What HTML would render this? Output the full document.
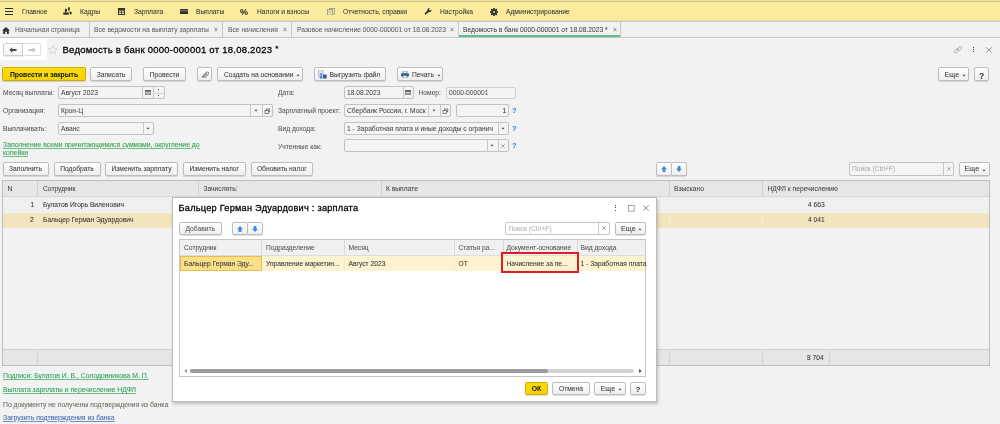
<!DOCTYPE html>
<html><head><meta charset="utf-8">
<style>
*{box-sizing:border-box;margin:0;padding:0}
html,body{width:1000px;height:424px;overflow:hidden;background:#f2f2f2;font-family:"Liberation Sans",sans-serif;color:#333}
#root{position:absolute;left:0;top:0;width:1000px;height:424px;overflow:hidden;background:#f2f2f2;will-change:transform}
.a{position:absolute}
.t{position:absolute;white-space:nowrap;-webkit-text-stroke-width:0.05px}
.lk{text-decoration:underline;text-decoration-thickness:1px;text-underline-offset:0.5px}
.g{text-decoration-color:rgba(39,160,77,.65)}
.b{text-decoration-color:rgba(59,104,179,.7)}
</style></head><body><div id="root">
<div class="a" style="left:0px;top:0px;width:1000px;height:21px;background:#fbeb9d"></div>
<div class="a" style="left:0px;top:0px;width:1000px;height:1px;background:#efe1a0"></div>
<div class="a" style="left:0px;top:1px;width:1000px;height:1px;background:#d2c382"></div>
<div class="a" style="left:0px;top:20px;width:1000px;height:1px;background:#eadb94"></div>
<div class="a" style="left:0px;top:21px;width:1000px;height:1px;background:#c9c9c9"></div>
<div class="t " style="left:22px;top:8px;font-size:6.7px;line-height:8px;color:#353535;font-weight:normal;">Главное</div>
<div class="t " style="left:80px;top:8px;font-size:6.7px;line-height:8px;color:#353535;font-weight:normal;">Кадры</div>
<div class="t " style="left:134px;top:8px;font-size:6.7px;line-height:8px;color:#353535;font-weight:normal;">Зарплата</div>
<div class="t " style="left:196px;top:8px;font-size:6.7px;line-height:8px;color:#353535;font-weight:normal;">Выплаты</div>
<div class="t " style="left:257px;top:8px;font-size:6.7px;line-height:8px;color:#353535;font-weight:normal;">Налоги и взносы</div>
<div class="t " style="left:343px;top:8px;font-size:6.7px;line-height:8px;color:#353535;font-weight:normal;">Отчетность, справки</div>
<div class="t " style="left:440px;top:8px;font-size:6.7px;line-height:8px;color:#353535;font-weight:normal;">Настройка</div>
<div class="t " style="left:506px;top:8px;font-size:6.7px;line-height:8px;color:#353535;font-weight:normal;">Администрирование</div>
<div class="a" style="left:5px;top:8px;width:8px;height:1.1999999999999993px;background:#2b2b2b"></div>
<div class="a" style="left:5px;top:11px;width:8px;height:1.1999999999999993px;background:#2b2b2b"></div>
<div class="a" style="left:5px;top:14px;width:8px;height:1.1999999999999993px;background:#2b2b2b"></div>
<svg class="a" style="left:62px;top:6px" width="11" height="10" viewBox="0 0 11 10"><g fill="#2e2e2e"><ellipse cx="3.9" cy="4.3" rx="1.05" ry="1.9"/><rect x="1.3" y="6.4" width="5.4" height="2.3"/><ellipse cx="6.9" cy="2.9" rx="1" ry="1.8"/><path d="M7.3 5.3 L9.7 6.2 L9.5 8.2 L8.1 8.4 L7.5 6.8Z"/></g></svg>
<svg class="a" style="left:118px;top:8px" width="7" height="7" viewBox="0 0 7 7"><rect x="0.5" y="0.5" width="6" height="6" fill="none" stroke="#333" stroke-width="1"/><rect x="1" y="1" width="5" height="1.6" fill="#333"/><path d="M1 4.2H6M3.5 2.6V6.5" stroke="#333" stroke-width="0.8"/></svg>
<svg class="a" style="left:179.5px;top:9px" width="8" height="5" viewBox="0 0 8 5"><rect x="0" y="0" width="8" height="5" fill="#2e2e2e"/><rect x="0" y="1.2" width="8" height="1" fill="#fbeb9d" opacity="0.5"/></svg>
<div class="t " style="left:240px;top:5.5px;font-size:9px;line-height:12px;color:#2a2a2a;font-weight:bold;">%</div>
<svg class="a" style="left:327px;top:8px" width="8" height="7" viewBox="0 0 8 7"><rect x="2.5" y="0.5" width="5" height="5.5" fill="none" stroke="#999" stroke-width="0.9"/><rect x="0.5" y="1.5" width="5" height="5.5" fill="#fbeb9d" stroke="#999" stroke-width="0.9"/><path d="M1.5 3.2H4.5M1.5 4.6H4.5" stroke="#999" stroke-width="0.6"/></svg>
<svg class="a" style="left:424px;top:8px" width="8" height="7" viewBox="0 0 8 7"><path d="M7.6 1.6 A2.3 2.3 0 0 1 4.6 4 L1.6 6.8 L0.4 5.7 L3.3 2.8 A2.3 2.3 0 0 1 5.9 0.1 L4.8 1.5 L5.3 2.3 L6.2 2.5Z" fill="#2b2b2b"/></svg>
<svg class="a" style="left:490px;top:7.5px" width="8" height="8" viewBox="0 0 8 8"><g fill="#2b2b2b"><circle cx="4" cy="4" r="2.6"/><rect x="3.2" y="0" width="1.6" height="8"/><rect x="0" y="3.2" width="8" height="1.6"/><rect x="3.2" y="0" width="1.6" height="8" transform="rotate(45 4 4)"/><rect x="3.2" y="0" width="1.6" height="8" transform="rotate(-45 4 4)"/></g><circle cx="4" cy="4" r="1.1" fill="#fbeb9d"/></svg>
<div class="a" style="left:0px;top:22px;width:1000px;height:15px;background:#f0f0f0"></div>
<div class="a" style="left:0px;top:37px;width:1000px;height:1px;background:#c4c4c4"></div>
<svg class="a" style="left:2px;top:27px" width="8" height="7" viewBox="0 0 8 7"><path d="M4 0 L8 3.6 H6.8 V7 H4.9 V4.8 H3.1 V7 H1.2 V3.6 H0Z" fill="#333"/></svg>
<div class="t " style="left:15px;top:26px;font-size:6.7px;line-height:8px;color:#626262;font-weight:normal;">Начальная страница</div>
<div class="a" style="left:89px;top:22px;width:1px;height:15px;background:#c9c9c9"></div>
<div class="t " style="left:94px;top:26px;font-size:6.7px;line-height:8px;color:#626262;font-weight:normal;">Все ведомости на выплату зарплаты</div>
<div class="t " style="left:214px;top:26px;font-size:6.7px;line-height:8px;color:#777;font-weight:normal;">×</div>
<div class="a" style="left:222px;top:22px;width:1px;height:15px;background:#c9c9c9"></div>
<div class="t " style="left:228px;top:26px;font-size:6.7px;line-height:8px;color:#626262;font-weight:normal;">Все начисления</div>
<div class="t " style="left:283px;top:26px;font-size:6.7px;line-height:8px;color:#777;font-weight:normal;">×</div>
<div class="a" style="left:291px;top:22px;width:1px;height:15px;background:#c9c9c9"></div>
<div class="t " style="left:297px;top:26px;font-size:6.7px;line-height:8px;color:#626262;font-weight:normal;">Разовое начисление 0000-000001 от 18.08.2023</div>
<div class="t " style="left:450px;top:26px;font-size:6.7px;line-height:8px;color:#777;font-weight:normal;">×</div>
<div class="a" style="left:458px;top:22px;width:1px;height:15px;background:#c9c9c9"></div>
<div class="a" style="left:459px;top:22px;width:161px;height:15px;background:#f2f2f2"></div>
<div class="t " style="left:463px;top:26px;font-size:6.7px;line-height:8px;color:#444;font-weight:normal;">Ведомость в банк 0000-000001 от 18.08.2023 *</div>
<div class="t " style="left:613px;top:26px;font-size:6.7px;line-height:8px;color:#777;font-weight:normal;">×</div>
<div class="a" style="left:620px;top:22px;width:1px;height:15px;background:#c9c9c9"></div>
<div class="a" style="left:459px;top:35px;width:161px;height:2px;background:#5cbf85"></div>
<div class="a" style="left:0px;top:38px;width:47px;height:22px;background:#fff"></div>
<div class="a" style="left:3px;top:43px;width:20px;height:13px;border:1px solid #cfcfcf;border-radius:2px 0 0 2px;background:linear-gradient(#fff,#f3f3f3);box-shadow:0 1px 0 rgba(0,0,0,.08)"></div>
<div class="a" style="left:22px;top:43px;width:19px;height:13px;border:1px solid #dcdcdc;border-left:none;border-radius:0 2px 2px 0;background:#fff"></div>
<div class="a" style="left:22px;top:43px;width:1px;height:13px;background:#cfcfcf"></div>
<svg class="a" style="left:9px;top:46.5px" width="8" height="6" viewBox="0 0 8 6"><path d="M0.3 3 L3.3 0.3 V2 H7.5 V4 H3.3 V5.7Z" fill="#4a4a4a"/></svg>
<svg class="a" style="left:28px;top:46.5px" width="8" height="6" viewBox="0 0 8 6"><path d="M7.7 3 L4.7 0.3 V2 H0.5 V4 H4.7 V5.7Z" fill="#c4c4c4"/></svg>
<svg class="a" style="left:47.5px;top:45px" width="10" height="10" viewBox="0 0 10 10"><path d="M5 0.6 L6.3 3.6 L9.4 3.8 L7 5.9 L7.8 9 L5 7.3 L2.2 9 L3 5.9 L0.6 3.8 L3.7 3.6Z" fill="none" stroke="#cfcfcf" stroke-width="0.8"/></svg>
<div class="t " style="left:62.5px;top:44px;font-size:9.5px;line-height:12px;color:#000;font-weight:normal;-webkit-text-stroke-width:0.28px;letter-spacing:0.25px">Ведомость в банк 0000-000001 от 18.08.2023 <span style="font-size:8px;position:relative;top:-2px">*</span></div>
<svg class="a" style="left:952.5px;top:46px" width="10" height="8" viewBox="0 0 10 8"><g fill="none" stroke="#9c9c9c" stroke-width="0.8"><rect x="0.8" y="3.6" width="5" height="2.6" rx="1.3" transform="rotate(-40 3.3 4.9)"/><rect x="4.2" y="1.2" width="5" height="2.6" rx="1.3" transform="rotate(-40 6.7 2.5)"/></g></svg>
<div class="a" style="left:972.5px;top:46.5px;width:1.2999999999999545px;height:1.2999999999999972px;background:#333"></div>
<div class="a" style="left:972.5px;top:48.8px;width:1.2999999999999545px;height:1.2999999999999972px;background:#333"></div>
<div class="a" style="left:972.5px;top:51.1px;width:1.2999999999999545px;height:1.2999999999999972px;background:#333"></div>
<svg class="a" style="left:986px;top:47px" width="6" height="6" viewBox="0 0 6 6"><path d="M0.3 0.3L5.7 5.7M5.7 0.3L0.3 5.7" stroke="#8c8c8c" stroke-width="0.9"/></svg>
<div class="a" style="left:2px;top:67px;width:84px;height:14px;border:1px solid #cdae00;border-radius:1.5px;background:linear-gradient(#fadb10,#f5d300);box-shadow:0 1px 1px rgba(0,0,0,.15)"></div>
<div class="t" style="left:2px;width:84px;text-align:center;top:71px;font-size:6.8px;line-height:8px;color:#1a1a30;font-weight:bold">Провести и закрыть</div>
<div class="a" style="left:90px;top:67px;width:42px;height:14px;border:1px solid #bdbdbd;border-radius:2px;background:linear-gradient(#fefefe,#eeeeee);box-shadow:0 1px 1px rgba(0,0,0,.13);"></div>
<div class="t" style="left:90px;width:42px;text-align:center;top:71px;font-size:6.7px;line-height:8px;color:#3a3a3a;font-weight:normal">Записать</div>
<div class="a" style="left:143px;top:67px;width:43px;height:14px;border:1px solid #bdbdbd;border-radius:2px;background:linear-gradient(#fefefe,#eeeeee);box-shadow:0 1px 1px rgba(0,0,0,.13);"></div>
<div class="t" style="left:143px;width:43px;text-align:center;top:71px;font-size:6.7px;line-height:8px;color:#3a3a3a;font-weight:normal">Провести</div>
<div class="a" style="left:196.5px;top:67px;width:15.5px;height:14px;border:1px solid #bdbdbd;border-radius:2px;background:linear-gradient(#fefefe,#eeeeee);box-shadow:0 1px 1px rgba(0,0,0,.13);"></div>
<svg class="a" style="left:200.5px;top:71px" width="8" height="7" viewBox="0 0 8 7"><path d="M1 5.8 L5.6 1.2 A1.3 1.3 0 0 1 7.4 3 L3.2 7.2 A0.8 0.8 0 0 1 2 6 L5.8 2.2" fill="none" stroke="#8a8a8a" stroke-width="1.1"/></svg>
<div class="a" style="left:217px;top:67px;width:86px;height:14px;border:1px solid #bdbdbd;border-radius:2px;background:linear-gradient(#fefefe,#eeeeee);box-shadow:0 1px 1px rgba(0,0,0,.13);"></div>
<div class="t " style="left:224px;top:71px;font-size:6.7px;line-height:8px;color:#3a3a3a;font-weight:normal;">Создать на основании</div>
<svg class="a" style="left:296px;top:73.5px" width="4" height="3" viewBox="0 0 4 3"><path d="M0.5 0.8 H3.5 L2 2.4Z" fill="#444"/></svg>
<div class="a" style="left:314px;top:67px;width:72px;height:14px;border:1px solid #bdbdbd;border-radius:2px;background:linear-gradient(#fefefe,#eeeeee);box-shadow:0 1px 1px rgba(0,0,0,.13);"></div>
<div class="t " style="left:329.5px;top:71px;font-size:6.7px;line-height:8px;color:#3a3a3a;font-weight:normal;">Выгрузить файл</div>
<svg class="a" style="left:318px;top:70px" width="9" height="9" viewBox="0 0 9 9"><rect x="0.5" y="0" width="4.5" height="6" fill="#d8e4f2" stroke="#8fa8c8" stroke-width="0.6"/><path d="M3 3 V8.2 M1.5 6.8 L3 8.5 L4.5 6.8" stroke="#2d5da8" stroke-width="1" fill="none"/><rect x="5" y="4.5" width="3.6" height="4" fill="#2d5da8"/></svg>
<div class="a" style="left:397px;top:67px;width:46px;height:14px;border:1px solid #bdbdbd;border-radius:2px;background:linear-gradient(#fefefe,#eeeeee);box-shadow:0 1px 1px rgba(0,0,0,.13);"></div>
<div class="t " style="left:412px;top:71px;font-size:6.7px;line-height:8px;color:#3a3a3a;font-weight:normal;">Печать</div>
<svg class="a" style="left:401px;top:70.5px" width="8" height="7" viewBox="0 0 8 7"><rect x="2" y="0" width="4" height="2.2" fill="#fff" stroke="#555" stroke-width="0.6"/><rect x="0" y="2.2" width="8" height="3.4" rx="0.8" fill="#2a62b0"/><rect x="2" y="4.5" width="4" height="2.5" fill="#fff" stroke="#555" stroke-width="0.6"/></svg>
<svg class="a" style="left:436.5px;top:73.5px" width="4" height="3" viewBox="0 0 4 3"><path d="M0.5 0.8 H3.5 L2 2.4Z" fill="#444"/></svg>
<div class="a" style="left:938px;top:67px;width:31px;height:14px;border:1px solid #bdbdbd;border-radius:2px;background:linear-gradient(#fefefe,#eeeeee);box-shadow:0 1px 1px rgba(0,0,0,.13);"></div>
<div class="t " style="left:944.5px;top:71px;font-size:7.2px;line-height:8px;color:#3a3a3a;font-weight:normal;">Еще</div>
<svg class="a" style="left:961.5px;top:74.0px" width="4" height="3" viewBox="0 0 4 3"><path d="M0.5 0.8 H3.5 L2 2.4Z" fill="#444"/></svg>
<div class="a" style="left:974px;top:67px;width:15px;height:14px;border:1px solid #bdbdbd;border-radius:2px;background:linear-gradient(#fefefe,#eeeeee);box-shadow:0 1px 1px rgba(0,0,0,.13);"></div>
<div class="t" style="left:974px;width:15px;text-align:center;top:72px;font-size:8.6px;line-height:8px;color:#3a3a3a;font-weight:bold">?</div>
<div class="t " style="left:3px;top:89px;font-size:6.7px;line-height:8px;color:#555;font-weight:normal;">Месяц выплаты:</div>
<div class="a" style="left:58px;top:86px;width:106.5px;height:13px;border:1px solid #c2c2c2;border-radius:2px;background:#f4f4f4"></div>
<div class="t " style="left:61px;top:89px;font-size:6.7px;line-height:8px;color:#474747;font-weight:normal;">Август 2023</div>
<div class="a" style="left:142px;top:86px;width:1px;height:13px;background:#c8c8c8"></div>
<div class="a" style="left:153px;top:86px;width:1px;height:13px;background:#c8c8c8"></div>
<div class="a" style="left:153px;top:92.5px;width:11px;height:1.0px;background:#d4d4d4"></div>
<svg class="a" style="left:145px;top:89.5px" width="6" height="5" viewBox="0 0 6 5"><rect x="0.3" y="0.3" width="5.4" height="4.6" fill="none" stroke="#555" stroke-width="0.6"/><rect x="0.3" y="0.3" width="5.4" height="1.5" fill="#555"/><path d="M0.5 3.3H5.5M2.1 1.8V5M3.9 1.8V5" stroke="#666" stroke-width="0.5"/></svg>
<div class="a" style="left:158.3px;top:89px;width:1.0px;height:1px;background:#444"></div>
<div class="a" style="left:158.3px;top:95.3px;width:1.0px;height:1.0px;background:#444"></div>
<div class="t " style="left:3px;top:107px;font-size:6.7px;line-height:8px;color:#555;font-weight:normal;">Организация:</div>
<div class="a" style="left:58px;top:104px;width:214.5px;height:13px;border:1px solid #c2c2c2;border-radius:2px;background:#f4f4f4"></div>
<div class="t " style="left:61px;top:107px;font-size:6.7px;line-height:8px;color:#474747;font-weight:normal;">Крон-Ц</div>
<div class="a" style="left:250px;top:104px;width:1px;height:13px;background:#c8c8c8"></div>
<div class="a" style="left:261.5px;top:104px;width:1.0px;height:13px;background:#c8c8c8"></div>
<svg class="a" style="left:254px;top:109.0px" width="4" height="3" viewBox="0 0 4 3"><path d="M0.5 0.8 H3.5 L2 2.4Z" fill="#444"/></svg>
<svg class="a" style="left:264px;top:107.5px" width="7" height="7" viewBox="0 0 7 7"><rect x="2.4" y="1" width="3.4" height="2.8" fill="none" stroke="#555" stroke-width="0.7"/><rect x="1" y="2.6" width="3.4" height="2.8" fill="#f4f4f4" stroke="#555" stroke-width="0.7"/></svg>
<div class="t " style="left:3px;top:125px;font-size:6.7px;line-height:8px;color:#555;font-weight:normal;">Выплачивать:</div>
<div class="a" style="left:58px;top:121.5px;width:95.5px;height:13.0px;border:1px solid #c2c2c2;border-radius:2px;background:#f4f4f4"></div>
<div class="t " style="left:61px;top:125px;font-size:6.7px;line-height:8px;color:#474747;font-weight:normal;">Аванс</div>
<div class="a" style="left:142.5px;top:121.5px;width:1.0px;height:13.0px;background:#c8c8c8"></div>
<svg class="a" style="left:146px;top:126.5px" width="4" height="3" viewBox="0 0 4 3"><path d="M0.5 0.8 H3.5 L2 2.4Z" fill="#444"/></svg>
<div class="t lk g" style="left:3px;top:140.5px;font-size:6.85px;line-height:8px;color:#27a04d;font-weight:normal;">Заполнение всеми причитающимися суммами, округление до</div>
<div class="t lk g" style="left:3px;top:149px;font-size:6.85px;line-height:8px;color:#27a04d;font-weight:normal;">копейки</div>
<div class="t " style="left:278px;top:89px;font-size:6.7px;line-height:8px;color:#555;font-weight:normal;">Дата:</div>
<div class="a" style="left:344px;top:86px;width:69.5px;height:13px;border:1px solid #c2c2c2;border-radius:2px;background:#f4f4f4"></div>
<div class="t " style="left:347px;top:89px;font-size:6.7px;line-height:8px;color:#474747;font-weight:normal;">18.08.2023</div>
<div class="a" style="left:402.5px;top:86px;width:1.0px;height:13px;background:#c8c8c8"></div>
<svg class="a" style="left:405px;top:89.5px" width="6" height="5" viewBox="0 0 6 5"><rect x="0.3" y="0.3" width="5.4" height="4.6" fill="none" stroke="#555" stroke-width="0.6"/><rect x="0.3" y="0.3" width="5.4" height="1.5" fill="#555"/><path d="M0.5 3.3H5.5M2.1 1.8V5M3.9 1.8V5" stroke="#666" stroke-width="0.5"/></svg>
<div class="t " style="left:418.5px;top:89px;font-size:6.7px;line-height:8px;color:#555;font-weight:normal;">Номер:</div>
<div class="a" style="left:446px;top:86.5px;width:70px;height:12.5px;border:1px solid #cfcfcf;border-radius:2px;background:#f4f4f4"></div>
<div class="t " style="left:449px;top:89px;font-size:6.7px;line-height:8px;color:#555;font-weight:normal;">0000-000001</div>
<div class="t " style="left:278px;top:107px;font-size:6.7px;line-height:8px;color:#555;font-weight:normal;">Зарплатный проект:</div>
<div class="a" style="left:344px;top:104px;width:106.5px;height:13px;border:1px solid #c2c2c2;border-radius:2px;background:#f4f4f4"></div>
<div class="t " style="left:347px;top:107px;font-size:6.7px;line-height:8px;color:#474747;font-weight:normal;">Сбербанк России, г. Моск</div>
<div class="a" style="left:428px;top:104px;width:1px;height:13px;background:#c8c8c8"></div>
<div class="a" style="left:439.5px;top:104px;width:1.0px;height:13px;background:#c8c8c8"></div>
<svg class="a" style="left:431.5px;top:109.0px" width="4" height="3" viewBox="0 0 4 3"><path d="M0.5 0.8 H3.5 L2 2.4Z" fill="#444"/></svg>
<svg class="a" style="left:442px;top:107.5px" width="7" height="7" viewBox="0 0 7 7"><rect x="2.4" y="1" width="3.4" height="2.8" fill="none" stroke="#555" stroke-width="0.7"/><rect x="1" y="2.6" width="3.4" height="2.8" fill="#f4f4f4" stroke="#555" stroke-width="0.7"/></svg>
<div class="a" style="left:456px;top:104px;width:52.5px;height:13px;border:1px solid #c2c2c2;border-radius:2px;background:#f4f4f4"></div>
<div class="t " style="left:502.5px;top:107px;font-size:6.7px;line-height:8px;color:#333;font-weight:normal;">1</div>
<div class="t " style="left:512px;top:106.5px;font-size:7.5px;line-height:8px;color:#3a7fd0;font-weight:bold;">?</div>
<div class="t " style="left:278px;top:125px;font-size:6.7px;line-height:8px;color:#555;font-weight:normal;">Вид дохода:</div>
<div class="a" style="left:344px;top:121.5px;width:164.5px;height:13.0px;border:1px solid #c2c2c2;border-radius:2px;background:#f4f4f4"></div>
<div class="t " style="left:347px;top:125px;font-size:6.7px;line-height:8px;color:#474747;font-weight:normal;">1 - Заработная плата и иные доходы с огранич</div>
<div class="a" style="left:497.5px;top:121.5px;width:1.0px;height:13.0px;background:#c8c8c8"></div>
<svg class="a" style="left:500.8px;top:126.5px" width="4" height="3" viewBox="0 0 4 3"><path d="M0.5 0.8 H3.5 L2 2.4Z" fill="#444"/></svg>
<div class="t " style="left:512px;top:124.5px;font-size:7.5px;line-height:8px;color:#3a7fd0;font-weight:bold;">?</div>
<div class="t " style="left:278px;top:142.5px;font-size:6.7px;line-height:8px;color:#555;font-weight:normal;">Учтенные как:</div>
<div class="a" style="left:344px;top:139px;width:164.5px;height:13px;border:1px solid #c2c2c2;border-radius:2px;background:#f4f4f4"></div>
<div class="a" style="left:486.5px;top:139px;width:1.0px;height:13px;background:#c8c8c8"></div>
<div class="a" style="left:497.5px;top:139px;width:1.0px;height:13px;background:#c8c8c8"></div>
<svg class="a" style="left:489.8px;top:144.0px" width="4" height="3" viewBox="0 0 4 3"><path d="M0.5 0.8 H3.5 L2 2.4Z" fill="#444"/></svg>
<svg class="a" style="left:500.8px;top:143.7px" width="4" height="4" viewBox="0 0 4 4"><path d="M0.3 0.3L3.7 3.7M3.7 0.3L0.3 3.7" stroke="#8a8a8a" stroke-width="0.7"/></svg>
<div class="t " style="left:512px;top:142px;font-size:7.5px;line-height:8px;color:#3a7fd0;font-weight:bold;">?</div>
<div class="a" style="left:2.5px;top:162px;width:46.0px;height:14px;border:1px solid #bdbdbd;border-radius:2px;background:linear-gradient(#fefefe,#eeeeee);box-shadow:0 1px 1px rgba(0,0,0,.13);"></div>
<div class="t" style="left:2.5px;width:46.0px;text-align:center;top:165px;font-size:6.7px;line-height:8px;color:#3a3a3a;font-weight:normal">Заполнить</div>
<div class="a" style="left:53.5px;top:162px;width:47.0px;height:14px;border:1px solid #bdbdbd;border-radius:2px;background:linear-gradient(#fefefe,#eeeeee);box-shadow:0 1px 1px rgba(0,0,0,.13);"></div>
<div class="t" style="left:53.5px;width:47.0px;text-align:center;top:165px;font-size:6.7px;line-height:8px;color:#3a3a3a;font-weight:normal">Подобрать</div>
<div class="a" style="left:105px;top:162px;width:73px;height:14px;border:1px solid #bdbdbd;border-radius:2px;background:linear-gradient(#fefefe,#eeeeee);box-shadow:0 1px 1px rgba(0,0,0,.13);"></div>
<div class="t" style="left:105px;width:73px;text-align:center;top:165px;font-size:6.7px;line-height:8px;color:#3a3a3a;font-weight:normal">Изменить зарплату</div>
<div class="a" style="left:183px;top:162px;width:62.5px;height:14px;border:1px solid #bdbdbd;border-radius:2px;background:linear-gradient(#fefefe,#eeeeee);box-shadow:0 1px 1px rgba(0,0,0,.13);"></div>
<div class="t" style="left:183px;width:62.5px;text-align:center;top:165px;font-size:6.7px;line-height:8px;color:#3a3a3a;font-weight:normal">Изменить налог</div>
<div class="a" style="left:251px;top:162px;width:61.5px;height:14px;border:1px solid #bdbdbd;border-radius:2px;background:linear-gradient(#fefefe,#eeeeee);box-shadow:0 1px 1px rgba(0,0,0,.13);"></div>
<div class="t" style="left:251px;width:61.5px;text-align:center;top:165px;font-size:6.7px;line-height:8px;color:#3a3a3a;font-weight:normal">Обновить налог</div>
<div class="a" style="left:656px;top:162px;width:16px;height:14px;border:1px solid #bdbdbd;border-radius:2px;background:linear-gradient(#fefefe,#eeeeee);box-shadow:0 1px 1px rgba(0,0,0,.13);"></div>
<div class="a" style="left:671px;top:162px;width:16px;height:14px;border:1px solid #bdbdbd;border-radius:2px;background:linear-gradient(#fefefe,#eeeeee);box-shadow:0 1px 1px rgba(0,0,0,.13);"></div>
<svg class="a" style="left:660.5px;top:166px" width="6" height="6" viewBox="0 0 6 6"><path d="M3 0 L6 3.2 H4.4 V6 H1.6 V3.2 H0Z" fill="#3a8fdc"/></svg>
<svg class="a" style="left:675.5px;top:166px" width="6" height="6" viewBox="0 0 6 6"><path d="M3 6 L6 2.8 H4.4 V0 H1.6 V2.8 H0Z" fill="#3a8fdc"/></svg>
<div class="a" style="left:849px;top:162px;width:104.5px;height:14px;border:1px solid #c2c2c2;border-radius:2px;background:#f4f4f4"></div>
<div class="t " style="left:852px;top:165px;font-size:6.7px;line-height:8px;color:#ababab;font-weight:normal;">Поиск (Ctrl+F)</div>
<div class="a" style="left:942.5px;top:161.8px;width:1.0px;height:13.699999999999989px;background:#c8c8c8"></div>
<svg class="a" style="left:946.5px;top:166.7px" width="4" height="4" viewBox="0 0 4 4"><path d="M0.3 0.3L3.7 3.7M3.7 0.3L0.3 3.7" stroke="#8a8a8a" stroke-width="0.7"/></svg>
<div class="a" style="left:958.5px;top:162px;width:31.0px;height:14px;border:1px solid #bdbdbd;border-radius:2px;background:linear-gradient(#fefefe,#eeeeee);box-shadow:0 1px 1px rgba(0,0,0,.13);"></div>
<div class="t " style="left:964.5px;top:165px;font-size:7.2px;line-height:8px;color:#3a3a3a;font-weight:normal;">Еще</div>
<svg class="a" style="left:982px;top:168.5px" width="4" height="3" viewBox="0 0 4 3"><path d="M0.5 0.8 H3.5 L2 2.4Z" fill="#444"/></svg>
<div class="a" style="left:2px;top:180px;width:988px;height:186px;border:1px solid #bdbdbd;background:#f2f2f2"></div>
<div class="a" style="left:3px;top:181px;width:986px;height:15px;background:#e6e6e6"></div>
<div class="a" style="left:3px;top:196px;width:986px;height:1px;background:#d6d6d6"></div>
<div class="t " style="left:7.5px;top:185px;font-size:6.7px;line-height:8px;color:#444;font-weight:normal;">N</div>
<div class="t " style="left:43px;top:185px;font-size:6.7px;line-height:8px;color:#444;font-weight:normal;">Сотрудник</div>
<div class="t " style="left:203.5px;top:185px;font-size:6.7px;line-height:8px;color:#444;font-weight:normal;">Зачислять:</div>
<div class="t " style="left:386px;top:185px;font-size:6.7px;line-height:8px;color:#444;font-weight:normal;">К выплате</div>
<div class="t " style="left:674px;top:185px;font-size:6.7px;line-height:8px;color:#444;font-weight:normal;">Взыскано</div>
<div class="t " style="left:767.5px;top:185px;font-size:6.7px;line-height:8px;color:#444;font-weight:normal;">НДФЛ к перечислению</div>
<div class="a" style="left:37px;top:181px;width:1px;height:15px;background:#d2d2d2"></div>
<div class="a" style="left:198px;top:181px;width:1px;height:15px;background:#d2d2d2"></div>
<div class="a" style="left:381px;top:181px;width:1px;height:15px;background:#d2d2d2"></div>
<div class="a" style="left:669px;top:181px;width:1px;height:15px;background:#d2d2d2"></div>
<div class="a" style="left:762px;top:181px;width:1px;height:15px;background:#d2d2d2"></div>
<div class="a" style="left:3px;top:197px;width:986px;height:15px;background:#f0f0f0"></div>
<div class="t " style="left:30.5px;top:201px;font-size:6.7px;line-height:8px;color:#333;font-weight:normal;">1</div>
<div class="t " style="left:43px;top:201px;font-size:6.7px;line-height:8px;color:#333;font-weight:normal;">Булатов Игорь Виленович</div>
<div class="t " style="left:808px;top:201px;font-size:6.7px;line-height:8px;color:#333;font-weight:normal;">4 663</div>
<div class="a" style="left:3px;top:213px;width:986px;height:15px;background:#f2e5bd"></div>
<div class="a" style="left:37px;top:213px;width:1px;height:15px;background:#f7eed2"></div>
<div class="a" style="left:198px;top:213px;width:1px;height:15px;background:#f7eed2"></div>
<div class="a" style="left:381px;top:213px;width:1px;height:15px;background:#f7eed2"></div>
<div class="a" style="left:669px;top:213px;width:1px;height:15px;background:#f7eed2"></div>
<div class="a" style="left:762px;top:213px;width:1px;height:15px;background:#f7eed2"></div>
<div class="a" style="left:829px;top:213px;width:1px;height:15px;background:#f7eed2"></div>
<div class="t " style="left:30px;top:216px;font-size:6.7px;line-height:8px;color:#333;font-weight:normal;">2</div>
<div class="t " style="left:43px;top:216px;font-size:6.7px;line-height:8px;color:#333;font-weight:normal;">Бальцер Герман Эдуардович</div>
<div class="t " style="left:808px;top:216px;font-size:6.7px;line-height:8px;color:#333;font-weight:normal;">4 041</div>
<div class="a" style="left:3px;top:350px;width:986px;height:15px;background:#e6e6e6"></div>
<div class="a" style="left:3px;top:349px;width:986px;height:1px;background:#d0d0d0"></div>
<div class="a" style="left:37px;top:350px;width:1px;height:15px;background:#d4d4d4"></div>
<div class="a" style="left:669px;top:350px;width:1px;height:15px;background:#d4d4d4"></div>
<div class="a" style="left:762px;top:350px;width:1px;height:15px;background:#d4d4d4"></div>
<div class="a" style="left:829px;top:350px;width:1px;height:15px;background:#d4d4d4"></div>
<div class="t " style="left:807px;top:354px;font-size:6.7px;line-height:8px;color:#333;font-weight:normal;">8 704</div>
<div class="t lk g" style="left:3px;top:372px;font-size:6.85px;line-height:8px;color:#27a04d;font-weight:normal;">Подписи: Булатов И. В., Солодовникова М. П.</div>
<div class="t lk g" style="left:3px;top:386px;font-size:6.85px;line-height:8px;color:#27a04d;font-weight:normal;">Выплата зарплаты и перечисление НДФЛ</div>
<div class="t " style="left:3px;top:400.5px;font-size:6.8px;line-height:8px;color:#6a6a60;font-weight:normal;">По документу не получены подтверждения из банка</div>
<div class="t lk b" style="left:3px;top:413.5px;font-size:6.85px;line-height:8px;color:#3b68b3;font-weight:normal;">Загрузить подтверждения из банка</div>
<div class="a" style="left:172px;top:197px;width:485px;height:205px;background:#fff;border:1px solid #bcbcbc;box-shadow:1px 2px 3px rgba(0,0,0,.22)"></div>
<div class="t " style="left:178.5px;top:202px;font-size:9.2px;line-height:12px;color:#000;font-weight:normal;-webkit-text-stroke-width:0.28px;letter-spacing:0.25px">Бальцер Герман Эдуардович : зарплата</div>
<div class="a" style="left:614.5px;top:205px;width:1.2000000000000455px;height:1.1999999999999886px;background:#444"></div>
<div class="a" style="left:614.5px;top:207.3px;width:1.2000000000000455px;height:1.1999999999999886px;background:#444"></div>
<div class="a" style="left:614.5px;top:209.6px;width:1.2000000000000455px;height:1.1999999999999886px;background:#444"></div>
<svg class="a" style="left:628px;top:204.5px" width="7" height="7" viewBox="0 0 7 7"><rect x="0.6" y="0.6" width="5.6" height="5.6" fill="none" stroke="#8a8a8a" stroke-width="0.75"/></svg>
<svg class="a" style="left:642.5px;top:205px" width="6" height="6" viewBox="0 0 6 6"><path d="M0.3 0.3L5.7 5.7M5.7 0.3L0.3 5.7" stroke="#7a7a7a" stroke-width="0.8"/></svg>
<div class="a" style="left:179px;top:222px;width:42.5px;height:13px;border:1px solid #bdbdbd;border-radius:2px;background:linear-gradient(#fefefe,#eeeeee);box-shadow:0 1px 1px rgba(0,0,0,.13);"></div>
<div class="t" style="left:179px;width:42.5px;text-align:center;top:225px;font-size:6.7px;line-height:8px;color:#555;font-weight:normal">Добавить</div>
<div class="a" style="left:232px;top:222px;width:16px;height:13px;border:1px solid #bdbdbd;border-radius:2px;background:linear-gradient(#fefefe,#eeeeee);box-shadow:0 1px 1px rgba(0,0,0,.13);"></div>
<div class="a" style="left:247px;top:222px;width:16px;height:13px;border:1px solid #bdbdbd;border-radius:2px;background:linear-gradient(#fefefe,#eeeeee);box-shadow:0 1px 1px rgba(0,0,0,.13);"></div>
<svg class="a" style="left:236.8px;top:225.5px" width="6" height="6" viewBox="0 0 6 6"><path d="M3 0 L6 3.2 H4.4 V6 H1.6 V3.2 H0Z" fill="#3a8fdc"/></svg>
<svg class="a" style="left:251.8px;top:225.5px" width="6" height="6" viewBox="0 0 6 6"><path d="M3 6 L6 2.8 H4.4 V0 H1.6 V2.8 H0Z" fill="#3a8fdc"/></svg>
<div class="a" style="left:505.4px;top:222px;width:104.20000000000005px;height:13px;border:1px solid #c6c6c6;border-radius:2px;background:#fff"></div>
<div class="t " style="left:508.4px;top:225px;font-size:6.7px;line-height:8px;color:#b0b0b0;font-weight:normal;">Поиск (Ctrl+F)</div>
<div class="a" style="left:598.4px;top:221.4px;width:1.0px;height:13.299999999999983px;background:#c8c8c8"></div>
<svg class="a" style="left:601.8px;top:226px" width="4" height="4" viewBox="0 0 4 4"><path d="M0.3 0.3L3.7 3.7M3.7 0.3L0.3 3.7" stroke="#8a8a8a" stroke-width="0.7"/></svg>
<div class="a" style="left:614.8px;top:222px;width:30.90000000000009px;height:13px;border:1px solid #bdbdbd;border-radius:2px;background:linear-gradient(#fefefe,#eeeeee);box-shadow:0 1px 1px rgba(0,0,0,.13);"></div>
<div class="t " style="left:621px;top:225px;font-size:7.2px;line-height:8px;color:#3a3a3a;font-weight:normal;">Еще</div>
<svg class="a" style="left:638px;top:228.0px" width="4" height="3" viewBox="0 0 4 3"><path d="M0.5 0.8 H3.5 L2 2.4Z" fill="#444"/></svg>
<div class="a" style="left:179px;top:239px;width:467px;height:138px;border:1px solid #c6c6c6;background:#fff"></div>
<div class="a" style="left:180px;top:240.3px;width:465px;height:15.0px;background:#f0f0f0"></div>
<div class="a" style="left:180px;top:255.3px;width:465px;height:1.0px;background:#dddddd"></div>
<div class="t " style="left:184px;top:243.5px;font-size:6.7px;line-height:8px;color:#555;font-weight:normal;">Сотрудник</div>
<div class="t " style="left:266px;top:243.5px;font-size:6.7px;line-height:8px;color:#555;font-weight:normal;">Подразделение</div>
<div class="t " style="left:348.5px;top:243.5px;font-size:6.7px;line-height:8px;color:#555;font-weight:normal;">Месяц</div>
<div class="t " style="left:458.5px;top:243.5px;font-size:6.7px;line-height:8px;color:#555;font-weight:normal;">Статья ра...</div>
<div class="t " style="left:506.5px;top:243.5px;font-size:6.7px;line-height:8px;color:#555;font-weight:normal;">Документ-основание</div>
<div class="t " style="left:580.5px;top:243.5px;font-size:6.7px;line-height:8px;color:#555;font-weight:normal;">Вид дохода</div>
<div class="a" style="left:261px;top:240.3px;width:1px;height:15.0px;background:#dadada"></div>
<div class="a" style="left:344px;top:240.3px;width:1px;height:15.0px;background:#dadada"></div>
<div class="a" style="left:453.8px;top:240.3px;width:1.0px;height:15.0px;background:#dadada"></div>
<div class="a" style="left:502.6px;top:240.3px;width:1.0px;height:15.0px;background:#dadada"></div>
<div class="a" style="left:576.6px;top:240.3px;width:1.0px;height:15.0px;background:#dadada"></div>
<div class="a" style="left:180px;top:255.8px;width:465px;height:15.199999999999989px;background:#fdf3d0"></div>
<div class="a" style="left:344px;top:255.8px;width:1px;height:15.199999999999989px;background:#fbebbb"></div>
<div class="a" style="left:453.8px;top:255.8px;width:1.0px;height:15.199999999999989px;background:#fbebbb"></div>
<div class="a" style="left:576.6px;top:255.8px;width:1.0px;height:15.199999999999989px;background:#fbebbb"></div>
<div class="a" style="left:179.5px;top:255.8px;width:82.0px;height:15.199999999999989px;background:#fbe08c;border:1px solid #e8bd4a"></div>
<div class="t " style="left:184px;top:260px;font-size:6.7px;line-height:8px;color:#333;font-weight:normal;">Бальцер Герман Эду...</div>
<div class="t " style="left:266px;top:260px;font-size:6.7px;line-height:8px;color:#333;font-weight:normal;">Управление маркетин...</div>
<div class="t " style="left:348.5px;top:260px;font-size:6.7px;line-height:8px;color:#333;font-weight:normal;">Август 2023</div>
<div class="t " style="left:458.5px;top:260px;font-size:6.7px;line-height:8px;color:#333;font-weight:normal;">ОТ</div>
<div class="t " style="left:506.5px;top:260px;font-size:6.7px;line-height:8px;color:#333;font-weight:normal;">Начисление за пе...</div>
<div class="t " style="left:580.5px;top:260px;font-size:6.7px;line-height:8px;color:#333;font-weight:normal;">1 - Заработная плата</div>
<div class="a" style="left:501px;top:252.1px;width:78px;height:21.200000000000017px;border:2px solid #e31b23"></div>
<svg class="a" style="left:183.5px;top:368.8px" width="3" height="4" viewBox="0 0 3 4"><path d="M3 0 L0 2 L3 4Z" fill="#999"/></svg>
<div class="a" style="left:190px;top:368.5px;width:444px;height:4.300000000000011px;background:#d2d2d2;border-radius:2.2px"></div>
<div class="a" style="left:190px;top:368.5px;width:358px;height:4.300000000000011px;background:#9b9b9b;border-radius:2.2px"></div>
<svg class="a" style="left:639.3px;top:368.8px" width="3" height="4" viewBox="0 0 3 4"><path d="M0 0 L3 2 L0 4Z" fill="#555"/></svg>
<div class="a" style="left:525px;top:381.5px;width:23px;height:13.5px;border:1px solid #cdae00;border-radius:1.5px;background:linear-gradient(#fadb10,#f5d300);box-shadow:0 1px 1px rgba(0,0,0,.15)"></div>
<div class="t" style="left:525px;width:23px;text-align:center;top:385px;font-size:6.8px;line-height:8px;color:#1a1a30;font-weight:bold">ОК</div>
<div class="a" style="left:552px;top:381.5px;width:38px;height:13.5px;border:1px solid #bdbdbd;border-radius:2px;background:linear-gradient(#fefefe,#eeeeee);box-shadow:0 1px 1px rgba(0,0,0,.13);"></div>
<div class="t" style="left:552px;width:38px;text-align:center;top:385px;font-size:6.7px;line-height:8px;color:#3a3a3a;font-weight:normal">Отмена</div>
<div class="a" style="left:594px;top:381.5px;width:32px;height:13.5px;border:1px solid #bdbdbd;border-radius:2px;background:linear-gradient(#fefefe,#eeeeee);box-shadow:0 1px 1px rgba(0,0,0,.13);"></div>
<div class="t " style="left:600.5px;top:385px;font-size:7.2px;line-height:8px;color:#3a3a3a;font-weight:normal;">Еще</div>
<svg class="a" style="left:618px;top:387.5px" width="4" height="3" viewBox="0 0 4 3"><path d="M0.5 0.8 H3.5 L2 2.4Z" fill="#444"/></svg>
<div class="a" style="left:630px;top:381.5px;width:16px;height:13.5px;border:1px solid #bdbdbd;border-radius:2px;background:linear-gradient(#fefefe,#eeeeee);box-shadow:0 1px 1px rgba(0,0,0,.13);"></div>
<div class="t" style="left:630px;width:16px;text-align:center;top:386px;font-size:8px;line-height:8px;color:#3a3a3a;font-weight:bold">?</div>
</div></body></html>
